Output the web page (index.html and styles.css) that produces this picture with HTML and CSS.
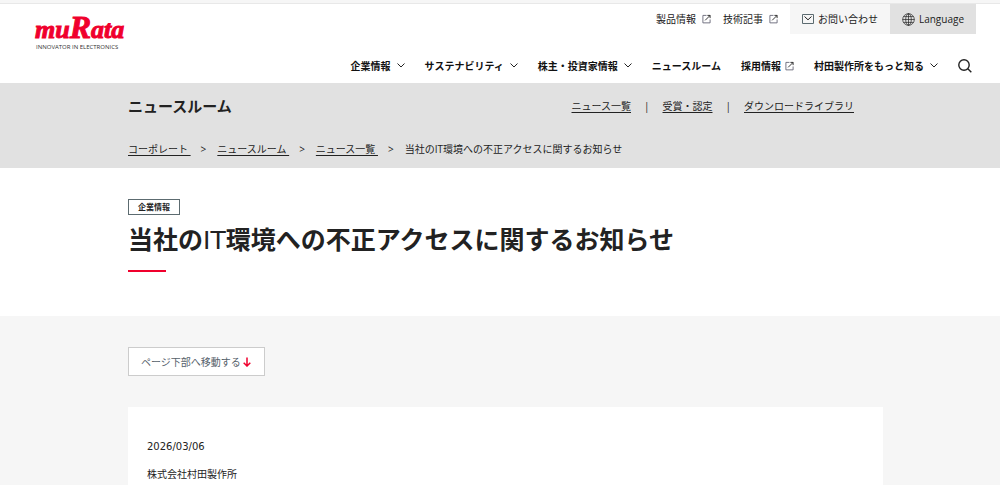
FILE: index.html
```html
<!DOCTYPE html>
<html lang="ja">
<head>
    <meta charset="UTF-8">
    <meta name="viewport" content="width=device-width, initial-scale=1.0">
    <title>当社のIT環境への不正アクセスに関するお知らせ | 村田製作所</title>
    <link rel="stylesheet" href="styles.css">
</head>
<body>
    <!-- Shared icon shapes -->
    <svg class="sprite" aria-hidden="true">
        <symbol id="chevron" viewBox="0 0 8 5"><path d="M0.5 0.5 L4 4 L7.5 0.5"/></symbol>
        <symbol id="external" viewBox="0 0 10 10"><path d="M5 1 H1 V9.3 H9 V5.5" stroke="#667"/><path d="M3.5 6.5 L8.8 1.2 M6 1 H9 V4"/></symbol>
    </svg>

    <header class="header">
        <a class="logo" href="#" aria-label="muRata">
            <span class="logo-name">mu<span class="logo-cap">R</span>ata</span>
            <span class="logo-tagline">INNOVATOR IN ELECTRONICS</span>
        </a>
        <div class="header-menus">
            <div class="utility">
                <a class="utility-link" href="#">製品情報<svg class="icon-external"><use href="#external"/></svg></a>
                <a class="utility-link" href="#">技術記事<svg class="icon-external"><use href="#external"/></svg></a>
                <a class="utility-box contact" href="#">
                    <svg class="icon-mail" viewBox="0 0 12 10"><path d="M0.5 0.5 H11.5 V9.5 H0.5 Z" stroke="#5c6b70"/><path d="M2.5 2.5 L6 5.8 L9.5 2.5" stroke="#222"/></svg>
                    お問い合わせ
                </a>
                <button class="utility-box language" type="button">
                    <svg class="icon-globe" viewBox="0 0 13 13"><circle cx="6.5" cy="6.5" r="5.8"/><ellipse cx="6.5" cy="6.5" rx="2.8" ry="5.8"/><path d="M6.5 0.5 V12.5 M0.5 6.5 H12.5 M1.5 3.6 H11.5 M1.5 9.4 H11.5"/></svg>
                    Language
                </button>
            </div>
            <nav class="main-nav">
                <a href="#">企業情報<svg class="icon-chevron"><use href="#chevron"/></svg></a>
                <a href="#">サステナビリティ<svg class="icon-chevron"><use href="#chevron"/></svg></a>
                <a href="#">株主・投資家情報<svg class="icon-chevron"><use href="#chevron"/></svg></a>
                <a href="#">ニュースルーム</a>
                <a class="external" href="#">採用情報<svg class="icon-external"><use href="#external"/></svg></a>
                <a href="#">村田製作所をもっと知る<svg class="icon-chevron"><use href="#chevron"/></svg></a>
                <button class="search" type="button" aria-label="検索">
                    <svg class="icon-search" viewBox="0 0 14 14"><circle cx="6" cy="6" r="5.2"/><path d="M9.8 9.8 L13.3 13.3"/></svg>
                </button>
            </nav>
        </div>
    </header>

    <section class="section-bar">
        <div class="section-top">
            <p class="section-title">ニュースルーム</p>
            <ul class="section-links">
                <li><a href="#">ニュース一覧</a></li>
                <li><a href="#">受賞・認定</a></li>
                <li><a href="#">ダウンロードライブラリ</a></li>
            </ul>
        </div>
        <ol class="breadcrumb">
            <li><a href="#">コーポレート&nbsp;</a></li>
            <li><a href="#">ニュースルーム&nbsp;</a></li>
            <li><a href="#">ニュース一覧&nbsp;</a></li>
            <li>当社のIT環境への不正アクセスに関するお知らせ</li>
        </ol>
    </section>

    <section class="page-title">
        <span class="tag">企業情報</span>
        <h1>当社の<span class="latin">IT</span>環境への不正アクセスに関するお知らせ</h1>
    </section>

    <main class="content">
        <a class="jump" href="#bottom">ページ下部へ移動する<svg class="icon-down" viewBox="0 0 8 10"><path d="M4 0.5 V9 M0.7 5.7 L4 9 L7.3 5.7"/></svg></a>
        <article class="article">
            <p class="date">2026/03/06</p>
            <p id="bottom">株式会社村田製作所</p>
        </article>
    </main>
</body>
</html>
```
FILE: styles.css
```css
* {
    margin: 0;
    padding: 0;
    box-sizing: border-box;
}

html {
    background-color: #fff;
}

body {
    font-family: "Open Sans", "Noto Sans CJK JP", sans-serif;
    font-size: 10px;
    line-height: 16px;
    color: #222;
    background-color: #f6f6f6;
}

a {
    color: inherit;
    text-decoration: none;
}

ul,
ol {
    list-style: none;
}

button {
    font: inherit;
    color: inherit;
    background: none;
    border: none;
    cursor: pointer;
}

svg {
    flex: none;
    fill: none;
    stroke: #222;
}

.sprite {
    display: none;
}

/* Header */
.header {
    display: flex;
    justify-content: space-between;
    padding: 0 24px 0 35px;
    margin-top: 3px;
    border-top: 1px solid #e8e8e8;
    background-color: #fff;
}

.logo {
    display: flex;
    flex-direction: column;
    padding-top: 11px;
}

.logo-name {
    font-family: "Liberation Serif", serif;
    font-size: 26px;
    font-weight: 700;
    font-style: italic;
    line-height: 24px;
    color: #f0002d;
    -webkit-text-stroke: 1px #f0002d;
}

.logo-cap {
    font-size: 32px;
    line-height: 24px;
}

.logo-tagline {
    padding-left: 1px;
    font-size: 6px;
    line-height: 10px;
    color: #333;
}

.utility {
    display: flex;
    justify-content: flex-end;
    align-items: center;
    height: 30px;
}

.utility-link {
    display: flex;
    align-items: center;
    gap: 6px;
    margin-right: 12px;
}

.utility-box {
    display: flex;
    align-items: center;
    gap: 4px;
    height: 100%;
    padding: 0 12px;
}

.contact {
    background-color: #f6f6f6;
}

.language {
    background-color: #e1e1e1;
}

.main-nav {
    display: flex;
    justify-content: flex-end;
    align-items: center;
    gap: 20px;
    height: 49px;
    padding: 14px 4px 0 0;
    font-weight: 700;
    color: #111;
}

.main-nav a {
    display: flex;
    align-items: center;
    gap: 6px;
}

.main-nav .external {
    gap: 4px;
}

.search {
    display: flex;
}

.icon-chevron {
    width: 8px;
    height: 5px;
}

.icon-external {
    width: 9px;
    height: 10px;
}

.icon-mail {
    width: 12px;
    height: 10px;
}

.icon-globe {
    width: 13px;
    height: 13px;
    stroke-width: 0.7;
}

.icon-search {
    width: 14px;
    height: 14px;
    stroke-width: 1.4;
}

/* Newsroom bar */
.section-bar {
    padding: 12px 117px 11px 128px;
    background-color: #e1e1e1;
}

.section-top {
    display: flex;
    justify-content: space-between;
    align-items: center;
    padding-right: 29px;
}

.section-title {
    font-size: 15px;
    font-weight: 700;
    line-height: 22px;
}

.section-links,
.breadcrumb {
    display: flex;
}

.section-links a,
.breadcrumb a {
    text-decoration: underline;
    text-underline-offset: 2px;
}

.section-links li + li::before {
    content: "|";
    margin: 0 13px;
}

.breadcrumb {
    margin-top: 24px;
}

.breadcrumb li + li::before {
    content: ">";
    margin: 0 11px 0 10px;
}

/* Page title */
.page-title {
    padding: 31px 117px 44px 128px;
    background-color: #fff;
}

.tag {
    display: block;
    width: fit-content;
    padding: 0 9px;
    font-size: 8px;
    font-weight: 700;
    line-height: 14px;
    border: 1px solid #5c6b70;
}

h1 {
    margin-top: 5px;
    font-size: 25px;
    font-weight: 700;
    line-height: 38px;
}

.latin {
    font-family: "DejaVu Sans", sans-serif;
    font-weight: 400;
    line-height: 24px;
}

h1::after {
    content: "";
    display: block;
    width: 38px;
    height: 2px;
    margin-top: 12px;
    background-color: #f0002d;
}

/* Body */
.content {
    padding: 31px 117px 0 128px;
}

.jump {
    display: flex;
    align-items: center;
    gap: 2px;
    width: fit-content;
    height: 29px;
    padding: 0 13px 0 12px;
    color: #55606a;
    background-color: #fff;
    border: 1px solid #ccc;
}

.icon-down {
    width: 8px;
    height: 10px;
    stroke: #f0002d;
    stroke-width: 1.5;
}

.article {
    display: flex;
    flex-direction: column;
    gap: 11px;
    margin-top: 31px;
    padding: 32px 19px 4px;
    background-color: #fff;
}

.date {
    font-family: "DejaVu Sans", sans-serif;
}
```
